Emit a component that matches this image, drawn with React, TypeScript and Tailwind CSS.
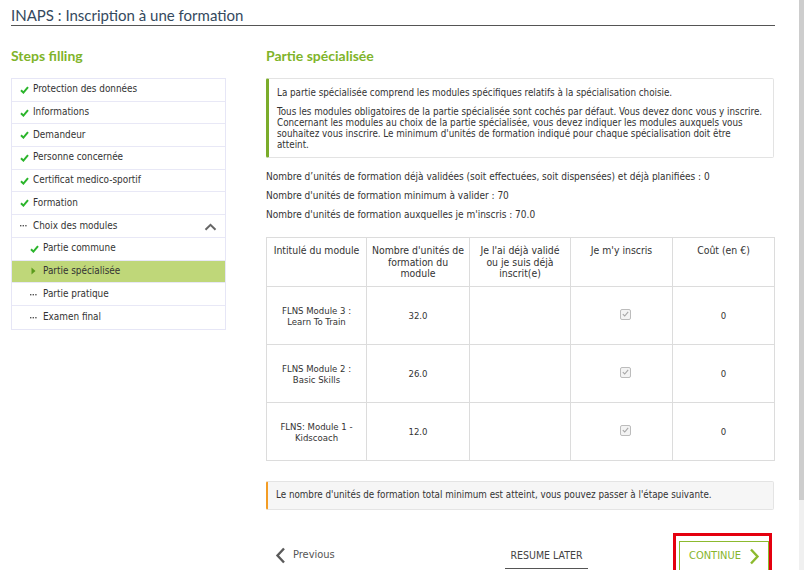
import React from "react";

const BODY = "font-['DejaVu_Sans_Condensed','DejaVu_Sans',sans-serif]";
const HEAD = "font-['Lato','Open_Sans',sans-serif]";

function Check({ className = "" }: { className?: string }) {
  return (
    <svg width="9" height="8" viewBox="0 0 9 8" className={className}>
      <path d="M1 4.3 L3.4 6.6 L8 1.2" fill="none" stroke="#2bb52b" strokeWidth="2" />
    </svg>
  );
}

function Dots({ className = "" }: { className?: string }) {
  return (
    <svg width="7" height="3" viewBox="0 0 7 3" className={className}>
      <rect x="0" y="1" width="1.4" height="1.4" fill="#555" />
      <rect x="2.6" y="1" width="1.4" height="1.4" fill="#555" />
      <rect x="5.2" y="1" width="1.4" height="1.4" fill="#555" />
    </svg>
  );
}

function Tri() {
  return (
    <svg width="5" height="8" viewBox="0 0 5 8">
      <path d="M0.5 0.5 L4.5 4 L0.5 7.5 Z" fill="#5b9a1c" />
    </svg>
  );
}

type Step = { label: string; sub?: boolean; status: "done" | "pending" | "active"; chevron?: boolean };

const steps: Step[] = [
  { label: "Protection des données", status: "done" },
  { label: "Informations", status: "done" },
  { label: "Demandeur", status: "done" },
  { label: "Personne concernée", status: "done" },
  { label: "Certificat medico-sportif", status: "done" },
  { label: "Formation", status: "done" },
  { label: "Choix des modules", status: "pending", chevron: true },
  { label: "Partie commune", sub: true, status: "done" },
  { label: "Partie spécialisée", sub: true, status: "active" },
  { label: "Partie pratique", sub: true, status: "pending" },
  { label: "Examen final", sub: true, status: "pending" },
];

const rows = [
  { name: ["FLNS Module 3 :", "Learn To Train"], units: "32.0" },
  { name: ["FLNS Module 2 :", "Basic Skills"], units: "26.0" },
  { name: ["FLNS: Module 1 -", "Kidscoach"], units: "12.0" },
];

function Box() {
  return (
    <span className="inline-flex h-[11px] w-[11px] items-center justify-center rounded-[2px] border border-[#bcbcbc] bg-[#f3f3f3]">
      <svg width="7" height="6" viewBox="0 0 7 6">
        <path d="M0.8 3.2 L2.7 5 L6.2 0.9" fill="none" stroke="#a6a6a6" strokeWidth="1.1" />
      </svg>
    </span>
  );
}

export default function App() {
  return (
    <div className={`flex h-[570px] w-[804px] overflow-hidden bg-white text-[#333] ${BODY}`}>
      <div className="flex-1 pl-[11px] pr-[24px]">
        {/* Title */}
        <div className={`border-b border-[#555] pb-[1px] pt-[7px] text-[15px] leading-[17px] text-[#34495e] ${HEAD}`}>
          INAPS : Inscription à une formation
        </div>

        <div className="mt-[22px] flex gap-[40px]">
          {/* Left column */}
          <div className="w-[215px]">
            <div className={`h-[16px] text-[14px] font-bold leading-[16px] text-[#7fb42a] ${HEAD}`}>Steps filling</div>
            <div className="mt-[14px] border border-[#e6e6f6]">
              {steps.map((s, i) => (
                <div
                  key={i}
                  className={`flex h-[22.7px] items-center text-[9.9px] ${i < steps.length - 1 ? "border-b border-[#e8e8f6]" : ""} ${
                    s.status === "active" ? "bg-[#bfd779]" : ""
                  } ${s.sub ? "pl-[18px]" : "pl-[8px]"}`}
                >
                  <span className="flex w-[12px] items-center">
                    {s.status === "done" && <Check />}
                    {s.status === "pending" && <Dots />}
                    {s.status === "active" && <span className="pl-[1px]"><Tri /></span>}
                  </span>
                  <span className="ml-[1px] flex-1">{s.label}</span>
                  {s.chevron && (
                    <svg width="13" height="8" viewBox="0 0 13 8" className="mr-[8px] mt-[3px]">
                      <path d="M1.5 6.8 L6.5 1.8 L11.5 6.8" fill="none" stroke="#666" strokeWidth="2" />
                    </svg>
                  )}
                </div>
              ))}
            </div>
          </div>

          {/* Right column */}
          <div className="w-[508px]">
            <div className={`h-[16px] text-[14px] font-bold leading-[16px] text-[#7fb42a] ${HEAD}`}>Partie spécialisée</div>

            <div className="mt-[14px] rounded-[2px] border border-l-[3px] border-[#e3e3e3] border-l-[#7aac2a] pb-[7px] pl-[8px] pr-[8px] pt-[8px] text-[9.75px] leading-[11px]">
              <p>La partie spécialisée comprend les modules spécifiques relatifs à la spécialisation choisie.</p>
              <p className="mt-[8px]">
                Tous les modules obligatoires de la partie spécialisée sont cochés par défaut. Vous devez donc vous y inscrire.
                <br />
                Concernant les modules au choix de la partie spécialisée, vous devez indiquer les modules auxquels vous
                <br />
                souhaitez vous inscrire. Le minimum d'unités de formation indiqué pour chaque spécialisation doit être
                <br />
                atteint.
              </p>
            </div>

            <div className="mt-[9px] text-[10px] leading-[19px]">
              <div>Nombre d’unités de formation déjà validées (soit effectuées, soit dispensées) et déjà planifiées : 0</div>
              <div>Nombre d'unités de formation minimum à valider : 70</div>
              <div>Nombre d'unités de formation auxquelles je m'inscris : 70.0</div>
            </div>

            <table className="mt-[13px] w-[508px] table-fixed border-collapse text-[10.4px] leading-[11.5px]">
              <colgroup>
                <col className="w-[100px]" />
                <col className="w-[103px]" />
                <col className="w-[101px]" />
                <col className="w-[102px]" />
                <col className="w-[102px]" />
              </colgroup>
              <thead>
                <tr className="h-[49px]">
                  {[
                    ["Intitulé du module"],
                    ["Nombre d'unités de", "formation du", "module"],
                    ["Je l'ai déjà validé", "ou je suis déjà", "inscrit(e)"],
                    ["Je m'y inscris"],
                    ["Coût (en €)"],
                  ].map((h, i) => (
                    <th key={i} className="whitespace-nowrap border border-[#dcdcdc] px-0 pb-[4px] pt-[7px] align-top font-normal">
                      {h.map((l, j) => (
                        <div key={j}>{l}</div>
                      ))}
                    </th>
                  ))}
                </tr>
              </thead>
              <tbody>
                {rows.map((r, i) => (
                  <tr key={i} className="h-[58px]">
                    <td className="border border-[#dcdcdc] px-[4px] text-center align-middle text-[9.5px] leading-[11px]">
                      <div>{r.name[0]}</div>
                      <div>{r.name[1]}</div>
                    </td>
                    <td className="border border-[#dcdcdc] text-center align-middle text-[9.5px]">{r.units}</td>
                    <td className="border border-[#dcdcdc]"></td>
                    <td className="border border-[#dcdcdc] text-center align-middle">
                      <div className="flex justify-center pb-[3px] pl-[8px]">
                        <Box />
                      </div>
                    </td>
                    <td className="border border-[#dcdcdc] text-center align-middle text-[9.5px]">0</td>
                  </tr>
                ))}
              </tbody>
            </table>

            <div className="mt-[20px] flex h-[29px] items-center rounded-[2px] border border-l-[2px] border-[#e4e4e4] border-l-[#f39c24] bg-[#f6f6f6] pl-[8px] text-[9.75px]">
              Le nombre d'unités de formation total minimum est atteint, vous pouvez passer à l'étape suivante.
            </div>

            {/* Footer */}
            <div className="mt-[23px] flex items-start">
              <div className="w-[239px] pl-[9px]">
                <div className="mt-[9px] flex h-[26px] items-center text-[11px] text-[#555]">
                  <svg width="11" height="17" viewBox="0 0 11 17">
                    <path d="M9 1.5 L2.5 8.5 L9 15.5" fill="none" stroke="#5a5a5a" strokeWidth="2.4" />
                  </svg>
                  <span className="ml-[7px]">Previous</span>
                </div>
              </div>
              <div className="mt-[9px] h-[27px] w-[83px] border-b border-[#555] text-center text-[10.5px] leading-[26px] text-[#444]">
                RESUME LATER
              </div>
              <div className="ml-[85px] h-[40px] w-[99px] border-[3px] border-[#e4000f] pl-[3px] pt-[5px]">
                <div className="flex h-[30px] w-[90px] items-center border border-b-0 border-[#8cba2e] pl-[9px] text-[11px] text-[#86b52a]">
                  <span>CONTINUE</span>
                  <svg width="11" height="17" viewBox="0 0 11 17" className="ml-[8px]">
                    <path d="M2 1.5 L8.5 8.5 L2 15.5" fill="none" stroke="#8cba2e" strokeWidth="2.4" />
                  </svg>
                </div>
              </div>
            </div>
          </div>
        </div>
      </div>
      {/* scrollbar */}
      <div className="flex w-[5px] flex-col">
        <div className="h-[500px] bg-[#cdcdcd]"></div>
        <div className="flex-1 bg-[#f0f0f0]"></div>
      </div>
    </div>
  );
}
